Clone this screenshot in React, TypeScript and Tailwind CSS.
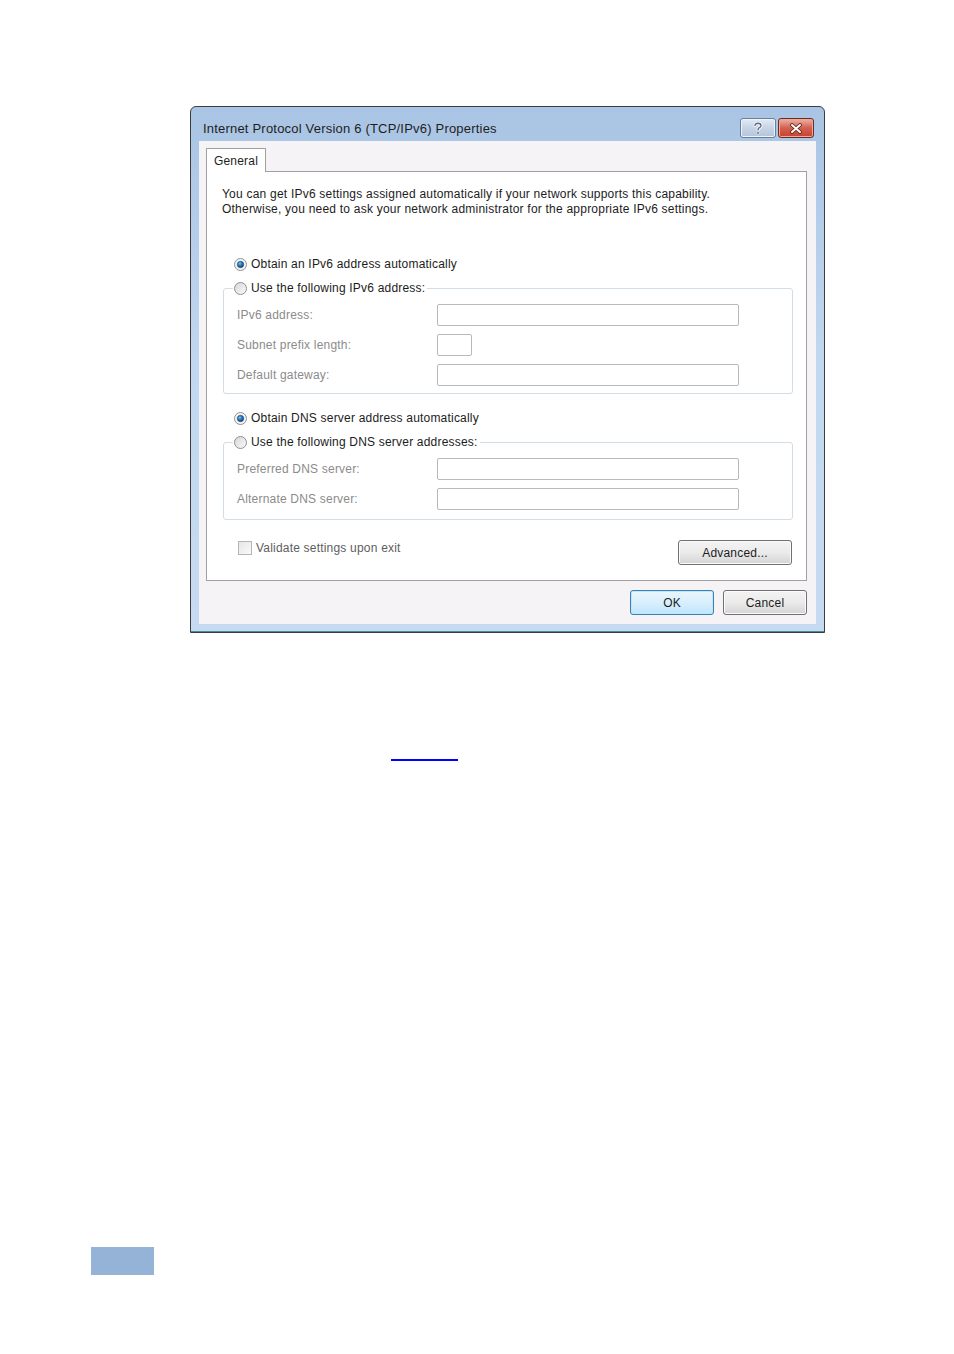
import { useId } from 'react';

const font = { fontFamily: '"Liberation Sans", Arial, sans-serif' };

function Radio({ checked = false }: { checked?: boolean }) {
  const id = useId();
  return (
    <svg width="13" height="13" viewBox="0 0 13 13" className="shrink-0">
      <defs>
        <linearGradient id={`${id}-bg`} x1="0" y1="0" x2="1" y2="1">
          <stop offset="0" stopColor="#d6d6d6" />
          <stop offset="1" stopColor="#fbfbfb" />
        </linearGradient>
        <radialGradient id={`${id}-dot`} cx="0.4" cy="0.35" r="0.7">
          <stop offset="0" stopColor="#7cc4f0" />
          <stop offset="0.5" stopColor="#2372b5" />
          <stop offset="1" stopColor="#113f70" />
        </radialGradient>
      </defs>
      <circle cx="6.5" cy="6.5" r="6" fill={checked ? '#f4f4f4' : `url(#${id}-bg)`} stroke="#8f9092" />
      {checked && <circle cx="6.5" cy="6.5" r="3.2" fill={`url(#${id}-dot)`} stroke="#1a4a78" strokeWidth="0.6" />}
    </svg>
  );
}

function Field({ label, short = false }: { label: string; short?: boolean }) {
  return (
    <div className="flex items-center h-[22px]">
      <span className="w-[213px] pl-[13px] text-[12px] tracking-[0.2px] text-[#8b8b8b] leading-[15px]">{label}</span>
      <div
        className={`h-[22px] ${short ? 'w-[35px]' : 'w-[302px]'} bg-white border border-[#b9b9b9] rounded-[2px]`}
      />
    </div>
  );
}

function GroupBox({ legend, bottom, children }: { legend: string; bottom: string; children: React.ReactNode }) {
  return (
    <fieldset className="ml-[16px] w-[570px] border border-[#d3dde5] rounded-[3px]">
      <legend className="ml-[9px] pl-px pr-[2px]">
        <span className="flex items-center gap-[4px] h-4 text-[12px] tracking-[0.2px] leading-[15px] text-[#1c1c1c]">
          <Radio />
          {legend}
        </span>
      </legend>
      <div className={`flex flex-col gap-[8px] pt-[8px] ${bottom}`}>{children}</div>
    </fieldset>
  );
}

function PushButton({ label, focused = false, width }: { label: string; focused?: boolean; width: string }) {
  return (
    <div
      className={`${width} h-[25px] flex items-center justify-center rounded-[3px] border text-[12px] tracking-[0.2px] text-[#1c1c1c] ${
        focused
          ? 'border-[#3c7fb1] bg-gradient-to-b from-[#eaf6fd] via-[#d9effc] to-[#bee6fd] shadow-[inset_0_0_0_1px_#bfe6fb]'
          : 'border-[#707070] bg-gradient-to-b from-[#f3f3f3] via-[#ebebeb] to-[#d4d4d4] shadow-[inset_0_0_0_1px_#fbfbfb]'
      }`}
    >
      {label}
    </div>
  );
}

function HelpButton() {
  return (
    <div className="w-[36px] h-[20px] rounded-[3px] border border-[#6d7e99] bg-gradient-to-b from-[#e3ebf5] via-[#c6d4e6] to-[#b3c5dd] flex items-center justify-center shadow-[inset_0_0_0_1px_#eef3f9]">
      <svg width="10" height="13" viewBox="0 0 10 13">
        <path
          d="M2 3.6 Q2 1.2 5 1.2 Q8 1.2 8 3.6 Q8 5.2 5.8 6.2 Q5 6.6 5 8"
          fill="none"
          stroke="#ffffff"
          strokeWidth="3"
          strokeLinecap="round"
        />
        <path
          d="M2 3.6 Q2 1.2 5 1.2 Q8 1.2 8 3.6 Q8 5.2 5.8 6.2 Q5 6.6 5 8"
          fill="none"
          stroke="#5c6b83"
          strokeWidth="1.4"
          strokeLinecap="round"
        />
        <circle cx="5" cy="11" r="1.4" fill="#5c6b83" stroke="#ffffff" strokeWidth="0.6" />
      </svg>
    </div>
  );
}

function CloseButton() {
  return (
    <div className="w-[36px] h-[20px] rounded-[3px] border border-[#6e2b22] bg-gradient-to-b from-[#eab3a6] via-[#d2604f] to-[#c5412f] flex items-center justify-center shadow-[inset_0_0_0_1px_#eea898]">
      <svg width="14" height="11" viewBox="0 0 14 11">
        <path d="M3 2 L11 9 M11 2 L3 9" stroke="#5b1d15" strokeWidth="3.6" strokeLinecap="round" />
        <path d="M3 2 L11 9 M11 2 L3 9" stroke="#ffffff" strokeWidth="2" strokeLinecap="round" />
      </svg>
    </div>
  );
}

export default function App() {
  return (
    <div className="min-h-screen bg-white pt-[106px]" style={font}>
      {/* dialog window */}
      <div className="ml-[190px] w-[635px] h-[527px] border border-[#3d3d3d] rounded-t-[6px] bg-gradient-to-b from-[#a9c4e4] via-[#c2d8f0] to-[#c6dbf1] flex flex-col overflow-hidden">
        {/* title bar */}
        <div className="h-[34px] pt-[8px] pl-[12px] pr-[10px] flex items-center justify-between">
          <span className="text-[13px] tracking-[0.2px] leading-[15px] text-[#1e1e1e]">
            Internet Protocol Version 6 (TCP/IPv6) Properties
          </span>
          <div className="flex gap-[2px]">
            <HelpButton />
            <CloseButton />
          </div>
        </div>

        {/* client area */}
        <div className="ml-[8px] w-[617px] h-[483px] bg-[#f6f3f7] pt-[7px] pl-[7px]">
          <div className="relative z-10 -mb-px w-[60px] h-[24px] bg-white border border-b-0 border-[#a0a0a0] flex items-center justify-center text-[12px] tracking-[0.2px] text-[#1e1e1e]">
            General
          </div>
          <div className="w-[601px] h-[410px] bg-white border border-[#a0a0a0] flex flex-col">
            <p className="pl-[15px] pt-[15px] text-[12px] tracking-[0.22px] leading-[15px] text-[#1c1c1c]">
              You can get IPv6 settings assigned automatically if your network supports this capability.
              <br />
              Otherwise, you need to ask your network administrator for the appropriate IPv6 settings.
            </p>

            <div className="mt-[39px] ml-[27px] h-4 flex items-center gap-[4px] text-[12px] tracking-[0.2px] text-[#1c1c1c]">
              <Radio checked />
              Obtain an IPv6 address automatically
            </div>
            <div className="mt-[8px]">
              <GroupBox legend="Use the following IPv6 address:" bottom="pb-[7px]">
                <Field label="IPv6 address:" />
                <Field label="Subnet prefix length:" short />
                <Field label="Default gateway:" />
              </GroupBox>
            </div>

            <div className="mt-[16px] ml-[27px] h-4 flex items-center gap-[4px] text-[12px] tracking-[0.2px] text-[#1c1c1c]">
              <Radio checked />
              Obtain DNS server address automatically
            </div>
            <div className="mt-[8px]">
              <GroupBox legend="Use the following DNS server addresses:" bottom="pb-[9px]">
                <Field label="Preferred DNS server:" />
                <Field label="Alternate DNS server:" />
              </GroupBox>
            </div>

            <div className="mt-[20px] ml-[31px] mr-[14px] flex items-start justify-between">
              <div className="mt-[1px] flex items-center gap-[4px] h-[14px] text-[12px] tracking-[0.2px] text-[#5e5e5e]">
                <div className="w-[14px] h-[14px] border border-[#b5b5b5] bg-gradient-to-br from-[#e6e6e6] to-[#fafafa]" />
                Validate settings upon exit
              </div>
              <PushButton label="Advanced..." width="w-[114px]" />
            </div>
          </div>

          <div className="mt-[9px] pr-[9px] flex justify-end gap-[9px]">
            <PushButton label="OK" focused width="w-[84px]" />
            <PushButton label="Cancel" width="w-[84px]" />
          </div>
        </div>
        <div className="flex-1" />
        <div className="h-px bg-[#3f8e9f]" />
      </div>

      {/* underlined link */}
      <div className="mt-[126px] ml-[391px] w-[67px] h-[2px] bg-[#0000ff]" />

      {/* page marker */}
      <div className="mt-[486px] ml-[91px] w-[63px] h-[28px] bg-[#95b3d7]" />
    </div>
  );
}
